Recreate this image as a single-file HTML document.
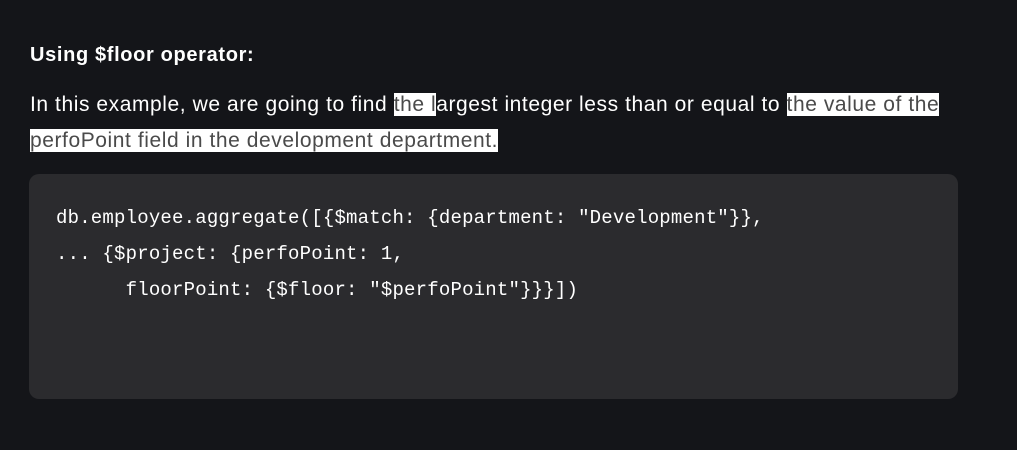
<!DOCTYPE html>
<html><head><meta charset="utf-8"><style>
html,body{margin:0;padding:0;background:#141519;width:1017px;height:450px;overflow:hidden;position:relative;font-family:"Liberation Sans",sans-serif;}
h3{position:absolute;left:30px;top:44px;margin:0;font-size:20px;font-weight:bold;color:#fff;letter-spacing:0.65px;}
.p{position:absolute;left:30px;font-size:21px;color:#fff;white-space:nowrap;letter-spacing:0.57px;line-height:28px;}
.hl{background:#fff;color:#4a4a4a;}
.code{position:absolute;left:29px;top:174px;width:929px;height:225px;background:#2b2b2e;border-radius:10px;}
.c{position:absolute;left:56px;font-family:"Liberation Mono",monospace;font-size:19px;color:#fff;white-space:pre;line-height:36px;letter-spacing:0.2px;}
</style></head><body>
<h3>Using $floor operator:</h3>
<div class="p" style="top:91px">In this example, we are going to find <span class="hl">the l</span>argest integer less than or equal to <span class="hl">the value of the</span></div>
<div class="p" style="top:127px"><span class="hl">perfoPoint field in the development department.</span></div>
<div class="code"></div>
<div class="c" style="top:200px">db.employee.aggregate([{$match: {department: "Development"}},
... {$project: {perfoPoint: 1,
      floorPoint: {$floor: "$perfoPoint"}}}])</div>
</body></html>
